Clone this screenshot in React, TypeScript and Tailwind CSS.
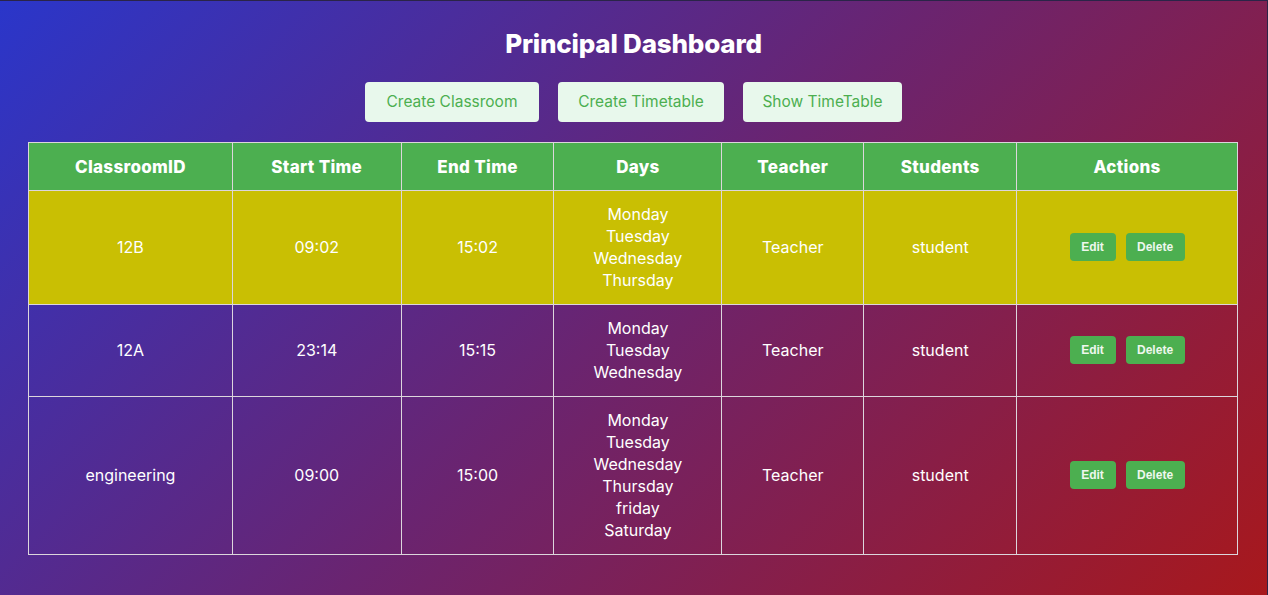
import React from "react";

type Row = {
  id: string;
  start: string;
  end: string;
  days: string[];
  teacher: string;
  students: string;
};

const rows: Row[] = [
  { id: "12B", start: "09:02", end: "15:02", days: ["Monday", "Tuesday", "Wednesday", "Thursday"], teacher: "Teacher", students: "student" },
  { id: "12A", start: "23:14", end: "15:15", days: ["Monday", "Tuesday", "Wednesday"], teacher: "Teacher", students: "student" },
  { id: "engineering", start: "09:00", end: "15:00", days: ["Monday", "Tuesday", "Wednesday", "Thursday", "friday", "Saturday"], teacher: "Teacher", students: "student" },
];

const headers = [
  { label: "ClassroomID", w: "w-[204px]" },
  { label: "Start Time", w: "w-[169px]" },
  { label: "End Time", w: "w-[153px]" },
  { label: "Days", w: "w-[168px]" },
  { label: "Teacher", w: "w-[142px]" },
  { label: "Students", w: "w-[153px]" },
  { label: "Actions", w: "w-[221px]" },
];

const topButtons = [
  { label: "Create Classroom", w: "w-[174px]" },
  { label: "Create Timetable", w: "w-[166px]" },
  { label: "Show TimeTable", w: "w-[159px]" },
];

const font = { fontFamily: "Inter, 'Open Sans', sans-serif" };

function App() {
  return (
    <div
      className="min-h-[595px] w-full bg-[linear-gradient(135deg,#2a36ca_0%,#6a2470_50%,#a8181c_100%)] border-t border-r border-[#2a2448] text-white"
      style={font}
    >
      <h1 className="pt-[27px] text-center text-[26px] font-extrabold leading-[32px] tracking-[-0.2px]">
        Principal Dashboard
      </h1>

      <div className="mt-[22px] flex justify-center gap-[19px]">
        {topButtons.map((b) => (
          <button
            key={b.label}
            className={`${b.w} h-[40px] rounded-[4px] bg-[#e8f8ec] text-[15.5px] text-[#4caf50]`}
          >
            {b.label}
          </button>
        ))}
      </div>

      <table className="mx-[28px] mt-[20px] w-[1210px] border-collapse text-center">
        <thead>
          <tr className="bg-[#4caf50]">
            {headers.map((h) => (
              <th
                key={h.label}
                className={`${h.w} border border-[#dcd6dc] pt-[13px] pb-[11px] text-[17px] font-extrabold leading-[23px] tracking-[0.3px]`}
              >
                {h.label}
              </th>
            ))}
          </tr>
        </thead>
        <tbody className="text-[16px] leading-[22px]">
          {rows.map((r, i) => (
            <tr key={r.id} className={i === 0 ? "bg-[#c9bf03]" : ""}>
              <td className="border border-[#dcd6dc] pt-[12px] pb-[13px]">{r.id}</td>
              <td className="border border-[#dcd6dc] pt-[12px] pb-[13px]">{r.start}</td>
              <td className="border border-[#dcd6dc] pt-[12px] pb-[13px]">{r.end}</td>
              <td className="border border-[#dcd6dc] pt-[12px] pb-[13px]">
                {r.days.map((d) => (
                  <div key={d}>{d}</div>
                ))}
              </td>
              <td className="border border-[#dcd6dc] pt-[12px] pb-[13px]">{r.teacher}</td>
              <td className="border border-[#dcd6dc] pt-[12px] pb-[13px]">{r.students}</td>
              <td className="border border-[#dcd6dc] pt-[12px] pb-[13px]">
                <div
                  className="flex justify-center gap-[10px] text-[12px] font-bold text-[#eef7ee]"
                  style={{ fontFamily: "'Liberation Sans', Arial, sans-serif" }}
                >
                  <button className="h-[28px] w-[46px] rounded-[4px] bg-[#4caf50]">Edit</button>
                  <button className="h-[28px] w-[59px] rounded-[4px] bg-[#4caf50]">Delete</button>
                </div>
              </td>
            </tr>
          ))}
        </tbody>
      </table>
    </div>
  );
}

export default App;
